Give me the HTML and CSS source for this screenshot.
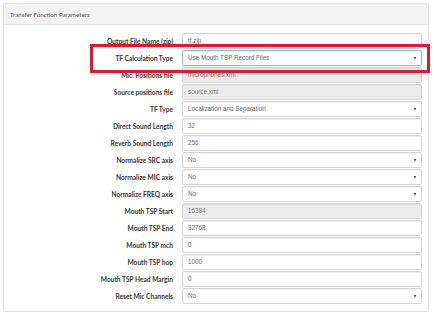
FILE: index.html
```html
<!DOCTYPE html>
<html>
<head>
<meta charset="utf-8">
<link rel="stylesheet" href="styles.css">
</head>
<body>
<div class="panel">
  <div class="panel-heading">Transfer Function Parameters</div>
  <div class="panel-body">
    <label class="lbl">Output File Name (zip)</label>
    <div class="ctl">tf.zip</div>
    <label class="lbl">TF Calculation Type</label>
    <div class="ctl sel focus">Use Mouth TSP Record Files<span class="caret"></span></div>
    <label class="lbl">Mic. Positions file</label>
    <div class="ctl ro">microphones.xml</div>
    <label class="lbl">Source positions file</label>
    <div class="ctl ro">source.xml</div>
    <label class="lbl">TF Type</label>
    <div class="ctl sel">Localization and Separation<span class="caret"></span></div>
    <label class="lbl">Direct Sound Length</label>
    <div class="ctl">32</div>
    <label class="lbl">Reverb Sound Length</label>
    <div class="ctl">256</div>
    <label class="lbl">Normalize SRC axis</label>
    <div class="ctl sel">No<span class="caret"></span></div>
    <label class="lbl">Normalize MIC axis</label>
    <div class="ctl sel">No<span class="caret"></span></div>
    <label class="lbl">Normalize FREQ axis</label>
    <div class="ctl sel">No<span class="caret"></span></div>
    <label class="lbl">Mouth TSP Start</label>
    <div class="ctl ro">16384</div>
    <label class="lbl">Mouth TSP End</label>
    <div class="ctl">32768</div>
    <label class="lbl">Mouth TSP mch</label>
    <div class="ctl">0</div>
    <label class="lbl">Mouth TSP hop</label>
    <div class="ctl">1000</div>
    <label class="lbl">Mouth TSP Head Margin</label>
    <div class="ctl">0</div>
    <label class="lbl">Reset Mic Channels</label>
    <div class="ctl sel">No<span class="caret"></span></div>
  </div>
</div>
<div class="highlight"></div>
</body>
</html>
```
FILE: styles.css
```css
html, body {
  margin: 0;
  padding: 0;
  background: #ffffff;
}
body {
  font-family: "Lato", "Liberation Sans", sans-serif;
  color: #333;
  padding: 3px 5px 0 3px;
  position: relative;
}
.panel {
  width: 424px;
  border: 1px solid #e2e2e2;
  border-radius: 2px;
  box-shadow: 0 1px 1px rgba(0,0,0,0.05);
}
.panel-heading {
  height: 20px;
  line-height: 21px;
  padding-left: 6px;
  background: #f3f3f3;
  border-bottom: 1px solid #e2e2e2;
  font-size: 6.2px;
  color: #555;
}
.panel-body {
  display: grid;
  grid-template-columns: 1fr 240px;
  column-gap: 7px;
  row-gap: 1px;
  padding: 8px 6px 7px 0;
}
.lbl {
  height: 16px;
  line-height: 16px;
  text-align: right;
  font-weight: bold;
  font-size: 6.6px;
  color: #333;
  padding-right: 2px;
}
.ctl {
  position: relative;
  height: 14px;
  line-height: 14px;
  border: 1px solid #d4d4d4;
  border-radius: 2px;
  padding-left: 5px;
  font-family: "Liberation Sans", "Lato", sans-serif;
  font-size: 6.3px;
  color: #666;
  background: #fff;
  box-shadow: inset 0 1px 1px rgba(0,0,0,0.06);
}
.ctl.ro {
  background: #ececec;
  color: #777;
}
.ctl.focus {
  border-color: #8fb8de;
}
.caret {
  position: absolute;
  right: 5px;
  top: 6px;
  width: 0;
  height: 0;
  border-left: 1.6px solid transparent;
  border-right: 1.6px solid transparent;
  border-top: 3px solid #333;
}
.highlight {
  position: absolute;
  left: 90px;
  top: 44px;
  width: 334px;
  height: 23px;
  border: 3px solid #dc1c2c;
}
```
